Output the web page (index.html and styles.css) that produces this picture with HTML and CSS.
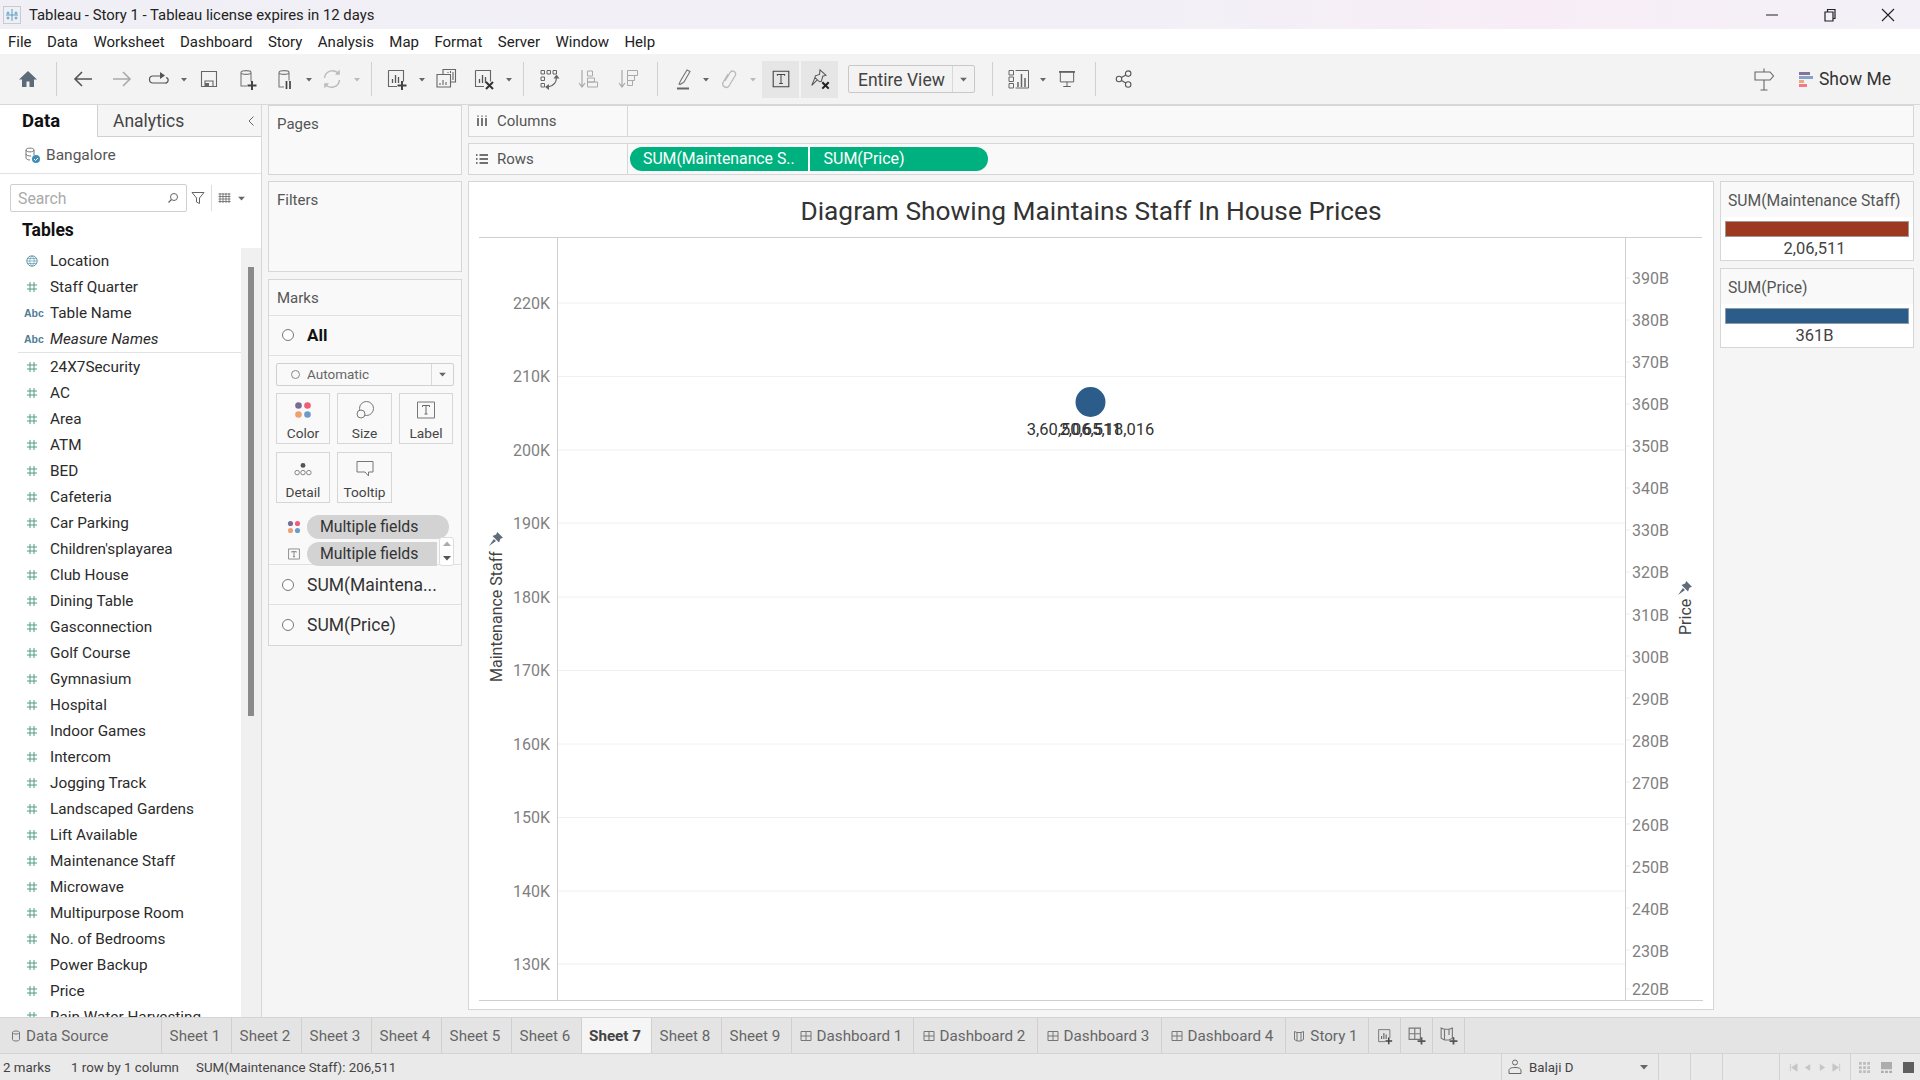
FILE: index.html
```html
<!DOCTYPE html>
<html lang="en">
<head>
<meta charset="utf-8">
<title>Tableau - Story 1</title>
<link rel="stylesheet" href="styles.css">
</head>
<body>
<svg class="sprite" aria-hidden="true">
  <defs>
    <symbol id="i-home" viewBox="0 0 24 24"><path fill="#5d6b78" d="M12 4 3 12.5h3V20h4.5v-5.5h3V20H18v-7.5h3z"/></symbol>
    <symbol id="i-back" viewBox="0 0 24 24"><path d="M22 12H5M12 5l-7 7 7 7" fill="none" stroke="#555" stroke-width="1.6"/></symbol>
    <symbol id="i-fwd" viewBox="0 0 24 24"><path d="M5 12h17M15 5l7 7-7 7" fill="none" stroke="#aaa" stroke-width="1.6"/></symbol>
    <symbol id="i-redo" viewBox="0 0 24 24"><path d="M15 9H7a3.5 3.5 0 0 0 0 7h12a2.800 2.800 0 0 0 1-5.500" fill="none" stroke="#555" stroke-width="1.200"/><path d="M14 5v7l5-3.500z" fill="#555"/></symbol>
    <symbol id="i-save" viewBox="0 0 24 24"><path d="M4.500 4.500h15v15h-15z" fill="none" stroke="#666" stroke-width="1.100"/><path d="M8 14h8v5.500H8z" fill="none" stroke="#666" stroke-width="1.100"/><path d="M8 16h4v3.500H8z" fill="#666"/></symbol>
    <symbol id="i-dsadd" viewBox="0 0 24 24"><path d="M6 5.500c0-2.500 10-2.500 10 0v9M6 5.500V19h6M6 5.500c0 2.500 10 2.500 10 0" fill="none" stroke="#777" stroke-width="1.100"/><path d="M17 14v9M12.500 18.500h9" stroke="#444" stroke-width="2"/></symbol>
    <symbol id="i-dspause" viewBox="0 0 24 24"><path d="M6 5.500c0-2.500 10-2.500 10 0v8M6 5.500V20h5M6 5.500c0 2.500 10 2.500 10 0" fill="none" stroke="#777" stroke-width="1.100"/><path d="M13.500 14v8M17 14v8" stroke="#444" stroke-width="1.700"/></symbol>
    <symbol id="i-refresh" viewBox="0 0 24 24"><path d="M4.500 11a8 8 0 0 1 14-4.500M19.500 13a8 8 0 0 1-14 4.500" fill="none" stroke="#bbb" stroke-width="1.500"/><path d="M15 8l5-.500-.500-5zM9 16l-5 .500.500 5z" fill="#bbb"/></symbol>
    <symbol id="i-sheetadd" viewBox="0 0 24 24"><path d="M3.500 3.500h15v11M3.500 3.500v16h8.500" fill="none" stroke="#666" stroke-width="1.100"/><path d="M7.500 16v-4M10.500 16V8M13.500 16v-6" stroke="#555" stroke-width="1.300"/><path d="M17 14v9M12.500 18.500h9" stroke="#444" stroke-width="2"/></symbol>
    <symbol id="i-dup" viewBox="0 0 24 24"><path d="M9 7V2.500h12.500V15H17" fill="none" stroke="#666" stroke-width="1.100"/><path d="M3 7.500h13.500V20H3z" fill="#f3f3f3" stroke="#666" stroke-width="1.100"/><path d="M6 18v-2M9 18v-5M12 18v-3M14 6v-1M16.500 6V4M19 13V5" stroke="#666" stroke-width="1.100"/></symbol>
    <symbol id="i-sheetx" viewBox="0 0 24 24"><path d="M3.500 3.500h15v11M3.500 3.500v16h8.500" fill="none" stroke="#666" stroke-width="1.100"/><path d="M7.500 16v-4M10.500 16V8M13.500 16v-6" stroke="#555" stroke-width="1.300"/><path d="M14 15l7 7M21 15l-7 7" stroke="#333" stroke-width="2"/></symbol>
    <symbol id="i-swap" viewBox="0 0 24 24"><path d="M4 3.500h3.500V7H4zM10 3.500h3.500V7H10zM16 3.500h3.500V7H16zM4 10h3.500v3.500H4zM4 16.500h3.500V20H4z" fill="none" stroke="#666"/><path d="M19.500 10c0 5-3 9-8.500 10" fill="none" stroke="#666" stroke-width="1.200"/><path d="M16.500 11.500h6l-3-4zM12 17v6l-4-3z" fill="#666"/></symbol>
    <symbol id="i-asc" viewBox="0 0 24 24"><path d="M6 3v17M3 16l3 4 3-4" fill="none" stroke="#aaa" stroke-width="1.200"/><path d="M11.500 4h5v5h-5zM11.500 11h7v4h-7zM11.500 15h10v5h-10z" fill="none" stroke="#aaa"/></symbol>
    <symbol id="i-desc" viewBox="0 0 24 24"><path d="M6 3v17M3 16l3 4 3-4" fill="none" stroke="#aaa" stroke-width="1.200"/><path d="M11.500 3.500h10v5h-10zM11.500 8.500h7v5h-7zM11.500 13.500h5v5h-5z" fill="none" stroke="#aaa"/></symbol>
    <symbol id="i-pen" viewBox="0 0 24 24"><path d="M8 17l2-4 6-10 3 1.500-6 10.500-4 2.500z" fill="none" stroke="#777" stroke-width="1.100"/><path d="M6 21.500h12" stroke="#666" stroke-width="2"/></symbol>
    <symbol id="i-clip" viewBox="0 0 24 24"><path d="M8 14l5.500-9a3 3 0 0 1 5 3L12 19a3.500 3.500 0 0 1-6-3.500L11 7" fill="none" stroke="#bbb" stroke-width="1.300"/></symbol>
    <symbol id="i-t" viewBox="0 0 24 24"><path d="M3.500 3.500h17v17h-17z" fill="none" stroke="#444" stroke-width="1.200"/><path d="M8 8.500V7h8v1.500M12 7v10M10 17h4" fill="none" stroke="#444" stroke-width="1.100"/></symbol>
    <symbol id="i-pinx" viewBox="0 0 24 24"><path d="M12 2l6.500 6-3.500 1-1.500 5.500-2 .500-5-4.500.500-2 4.500-1.500zM6.500 10.500 3 19l6-6" fill="none" stroke="#555" stroke-width="1.100"/><path d="M14.500 15.500l7 7M21.500 15.500l-7 7" stroke="#222" stroke-width="2.300"/></symbol>
    <symbol id="i-showme" viewBox="0 0 24 24"><path d="M3 3.500h4.500V8H3zM3 10h4.500v4.500H3zM3 16.500h4.500V21H3z" fill="none" stroke="#666"/><path d="M9.500 3.500h13V21h-13" fill="none" stroke="#666"/><path d="M12 20v-5M15.500 20V7M19 20v-9" stroke="#666" stroke-width="1.500"/></symbol>
    <symbol id="i-present" viewBox="0 0 24 24"><path d="M2.500 3.500h19" stroke="#555" stroke-width="2"/><path d="M4 4v11.500h16V4M12 15.500V21M7.500 21h9" fill="none" stroke="#555" stroke-width="1.100"/></symbol>
    <symbol id="i-share" viewBox="0 0 24 24"><circle cx="6" cy="12" r="3.300" fill="none" stroke="#555" stroke-width="1.300"/><circle cx="17" cy="5.500" r="3.300" fill="none" stroke="#555" stroke-width="1.300"/><circle cx="17" cy="18.500" r="3.300" fill="none" stroke="#555" stroke-width="1.300"/><path d="M9 10.300l5.200-3M9 13.700l5.200 3" stroke="#555" stroke-width="1.300"/></symbol>
    <symbol id="i-sign" viewBox="0 0 24 24"><path d="M3 5h15l3.500 4-3.500 4H3zM12 1.500V5M12 13v10M8.500 23h7" fill="none" stroke="#666" stroke-width="1.100"/></symbol>
    <symbol id="i-hash" viewBox="0 0 12 12"><path d="M4 1v10M8 1v10M1 4h10M1 8h10" fill="none" stroke="#4f9e80" stroke-width="1"/></symbol>
    <symbol id="i-globe" viewBox="0 0 12 12"><circle cx="6" cy="6" r="5.200" fill="none" stroke="#4e8ba0" stroke-width=".9"/><path d="M1 6h10M2 3.500h8M2 8.500h8M6 1c-3 3-3 7 0 10M6 1c3 3 3 7 0 10" fill="none" stroke="#4e8ba0" stroke-width=".6"/></symbol>
    <symbol id="i-dash" viewBox="0 0 12 12"><path d="M1 1.500h10v9H1zM6 1.500v9M1 6h10" fill="none" stroke="#777"/></symbol>
    <symbol id="i-book" viewBox="0 0 12 12"><path d="M1.500 1.500 4 2.500h4l2.500-1v8l-2.500 1.500H4L1.500 9.500zM4 2.500V11M8 2.500V11" fill="none" stroke="#777"/></symbol>
    <symbol id="i-cyl" viewBox="0 0 12 12"><path d="M2.500 2.500c0-2 7-2 7 0v7c0 2-7 2-7 0zM2.500 2.500c0 2 7 2 7 0" fill="none" stroke="#777"/></symbol>
    <symbol id="i-pin" viewBox="0 0 12 12"><path d="M7 0 12 5 9.800 5.800 8.600 9 3 3.400 6.200 2.200zM4.200 6 0 12 6 7.800z" fill="#5f6b7a"/></symbol>
    <symbol id="i-caret" viewBox="0 0 8 6"><path d="M0 1h8L4 5.500z" fill="#666"/></symbol>
    <symbol id="i-caret-soft" viewBox="0 0 8 6"><path d="M0 1h8L4 5.500z" fill="#bbb"/></symbol>
  </defs>
</svg>

<div class="app">
  <header class="titlebar">
    <svg class="logo" viewBox="0 0 18 18"><rect x=".5" y=".5" width="17" height="17" fill="#eef0f5" stroke="#c9c9d2"/><path d="M9 3v12M3 9h12M5 5.500v3M3.500 7h3M13 5.500v3M11.500 7h3M5 10.500v3M3.500 12h3M13 10.500v3M11.500 12h3" stroke="#5a9bc4" stroke-width="1"/></svg>
    <span class="titlebar-text">Tableau - Story 1 - Tableau license expires in 12 days</span>
    <div class="winctl">
      <svg viewBox="0 0 14 14"><path d="M1 7h12" stroke="#222" stroke-width="1"/></svg>
      <svg viewBox="0 0 14 14"><path d="M2 4h8v9H2zM4.500 4V1.500H12V10.500H10" fill="none" stroke="#222" stroke-width="1.200"/></svg>
      <svg viewBox="0 0 14 14"><path d="M1 1l12 12M13 1 1 13" stroke="#222" stroke-width="1.100"/></svg>
    </div>
  </header>

  <nav class="menubar">
    <span>File</span><span>Data</span><span>Worksheet</span><span>Dashboard</span><span>Story</span><span>Analysis</span><span>Map</span><span>Format</span><span>Server</span><span>Window</span><span>Help</span>
  </nav>

  <div class="toolbar">
    <div class="tb tb-first"><svg><use href="#i-home"/></svg></div>
    <div class="sep"></div>
    <div class="tb"><svg><use href="#i-back"/></svg></div>
    <div class="tb"><svg><use href="#i-fwd"/></svg></div>
    <div class="tb"><svg><use href="#i-redo"/></svg></div>
    <div class="car car-w"><svg><use href="#i-caret"/></svg></div>
    <div class="tb"><svg><use href="#i-save"/></svg></div>
    <div class="tb"><svg><use href="#i-dsadd"/></svg></div>
    <div class="tb"><svg><use href="#i-dspause"/></svg></div>
    <div class="car car-n"><svg><use href="#i-caret"/></svg></div>
    <div class="tb"><svg><use href="#i-refresh"/></svg></div>
    <div class="car"><svg><use href="#i-caret-soft"/></svg></div>
    <div class="sep"></div>
    <div class="tb"><svg><use href="#i-sheetadd"/></svg></div>
    <div class="car"><svg><use href="#i-caret"/></svg></div>
    <div class="tb"><svg><use href="#i-dup"/></svg></div>
    <div class="tb"><svg><use href="#i-sheetx"/></svg></div>
    <div class="car"><svg><use href="#i-caret"/></svg></div>
    <div class="sep"></div>
    <div class="tb"><svg><use href="#i-swap"/></svg></div>
    <div class="tb tb-sort"><svg><use href="#i-asc"/></svg></div>
    <div class="tb tb-sort"><svg><use href="#i-desc"/></svg></div>
    <div class="sep"></div>
    <div class="tb tb-pen"><svg><use href="#i-pen"/></svg></div>
    <div class="car car-n"><svg><use href="#i-caret"/></svg></div>
    <div class="tb tb-clip"><svg><use href="#i-clip"/></svg></div>
    <div class="car car-n"><svg><use href="#i-caret-soft"/></svg></div>
    <div class="tb-on tb-on-first"><svg><use href="#i-t"/></svg></div>
    <div class="tb-on"><svg><use href="#i-pinx"/></svg></div>
    <div class="fitbox"><span class="fitbox-text">Entire View</span><span class="fitbox-car"><svg><use href="#i-caret"/></svg></span></div>
    <div class="sep sep-fit"></div>
    <div class="tb"><svg><use href="#i-showme"/></svg></div>
    <div class="car"><svg><use href="#i-caret"/></svg></div>
    <div class="tb tb-sm"><svg><use href="#i-present"/></svg></div>
    <div class="sep"></div>
    <div class="tb tb-sm tb-share"><svg><use href="#i-share"/></svg></div>
    <div class="tb tb-sign"><svg><use href="#i-sign"/></svg></div>
    <div class="showme">
      <div class="showme-bars"><i class="b1"></i><i class="b2"></i><i class="b3"></i><i class="b4"></i></div>
      <span>Show Me</span>
    </div>
  </div>

  <main class="main">
    <aside class="datapane">
      <div class="tabs">
        <div class="tab-data">Data</div>
        <div class="tab-analytics"><span>Analytics</span><svg viewBox="0 0 8 12"><path d="M6.500 1.500 2 6l4.500 4.500" fill="none" stroke="#666" stroke-width="1"/></svg></div>
      </div>
      <div class="source">
        <svg class="source-ic" viewBox="0 0 18 18"><path d="M3 4c0-2.500 8-2.500 8 0v5M3 4v8c0 1 2 2 4 2M3 4c0 2.500 8 2.500 8 0M3 8c0 1.500 3 2 5 2" fill="none" stroke="#777"/><circle cx="13" cy="13" r="4" fill="#3d8fb8"/><path d="M11 13l1.500 1.500L15 12" fill="none" stroke="#fff"/></svg>
        <span>Bangalore</span>
      </div>
      <div class="searchrow">
        <div class="search"><span>Search</span><svg viewBox="0 0 12 12"><circle cx="7" cy="5" r="3.500" fill="none" stroke="#666"/><path d="M4.500 7.500 1.500 10.500" stroke="#666" stroke-width="1.200"/></svg></div>
        <svg class="filter-ic" viewBox="0 0 14 14"><path d="M1 1.500h12L8.500 7v5.500l-3-1.500V7z" fill="none" stroke="#666"/></svg>
        <div class="search-sep"></div>
        <svg class="list-ic" viewBox="0 0 12 10"><path d="M0 1h12M0 3.500h12M0 6h12M0 8.500h12M1.500 0v10M4.500 0v10M7.500 0v10M10.500 0v10" stroke="#666" stroke-width=".8" fill="none"/></svg>
        <svg class="list-car"><use href="#i-caret"/></svg>
      </div>
      <div class="tables">Tables</div>
      <div class="fieldwrap">
        <ul class="fields">
          <li><svg><use href="#i-globe"/></svg><span>Location</span></li>
          <li><svg><use href="#i-hash"/></svg><span>Staff Quarter</span></li>
          <li><b>Abc</b><span>Table Name</span></li>
          <li class="fields-last"><b>Abc</b><em>Measure Names</em></li>
          <li><svg><use href="#i-hash"/></svg><span>24X7Security</span></li>
          <li><svg><use href="#i-hash"/></svg><span>AC</span></li>
          <li><svg><use href="#i-hash"/></svg><span>Area</span></li>
          <li><svg><use href="#i-hash"/></svg><span>ATM</span></li>
          <li><svg><use href="#i-hash"/></svg><span>BED</span></li>
          <li><svg><use href="#i-hash"/></svg><span>Cafeteria</span></li>
          <li><svg><use href="#i-hash"/></svg><span>Car Parking</span></li>
          <li><svg><use href="#i-hash"/></svg><span>Children'splayarea</span></li>
          <li><svg><use href="#i-hash"/></svg><span>Club House</span></li>
          <li><svg><use href="#i-hash"/></svg><span>Dining Table</span></li>
          <li><svg><use href="#i-hash"/></svg><span>Gasconnection</span></li>
          <li><svg><use href="#i-hash"/></svg><span>Golf Course</span></li>
          <li><svg><use href="#i-hash"/></svg><span>Gymnasium</span></li>
          <li><svg><use href="#i-hash"/></svg><span>Hospital</span></li>
          <li><svg><use href="#i-hash"/></svg><span>Indoor Games</span></li>
          <li><svg><use href="#i-hash"/></svg><span>Intercom</span></li>
          <li><svg><use href="#i-hash"/></svg><span>Jogging Track</span></li>
          <li><svg><use href="#i-hash"/></svg><span>Landscaped Gardens</span></li>
          <li><svg><use href="#i-hash"/></svg><span>Lift Available</span></li>
          <li><svg><use href="#i-hash"/></svg><span>Maintenance Staff</span></li>
          <li><svg><use href="#i-hash"/></svg><span>Microwave</span></li>
          <li><svg><use href="#i-hash"/></svg><span>Multipurpose Room</span></li>
          <li><svg><use href="#i-hash"/></svg><span>No. of Bedrooms</span></li>
          <li><svg><use href="#i-hash"/></svg><span>Power Backup</span></li>
          <li><svg><use href="#i-hash"/></svg><span>Price</span></li>
          <li><svg><use href="#i-hash"/></svg><span>Rain Water Harvesting</span></li>
        </ul>
        <div class="scroll"><div class="scroll-thumb"></div></div>
      </div>
    </aside>

    <section class="cards">
      <div class="card card-pages"><div class="card-title">Pages</div></div>
      <div class="card card-filters"><div class="card-title">Filters</div></div>
      <div class="card card-marks">
        <div class="marks-title">Marks</div>
        <div class="marks-row marks-all"><i class="radio"></i><strong>All</strong></div>
        <div class="marks-body">
          <div class="marktype"><i class="radio-sm"></i><span>Automatic</span><span class="marktype-car"><svg><use href="#i-caret"/></svg></span></div>
          <div class="markbtns">
            <div class="markbtn">
              <svg viewBox="0 0 18 18"><circle cx="4.500" cy="4.500" r="3.300" fill="#7c6a96"/><circle cx="13.500" cy="4.500" r="3.300" fill="#ee5f75"/><circle cx="4.500" cy="13.500" r="3.300" fill="#f0a06e"/><circle cx="13.500" cy="13.500" r="3.300" fill="#6b9bc9"/></svg>
              <span>Color</span>
            </div>
            <div class="markbtn">
              <svg viewBox="0 0 18 18"><circle cx="10.500" cy="7.500" r="7" fill="none" stroke="#777"/><circle cx="5" cy="13" r="4" fill="#f9f9f9" stroke="#777"/></svg>
              <span>Size</span>
            </div>
            <div class="markbtn">
              <svg viewBox="0 0 18 18"><path d="M.500 1h17v16H.500z" fill="none" stroke="#777"/><path d="M5.500 6V4.500h7V6M9 4.500V13M7.500 13h3" fill="none" stroke="#666"/></svg>
              <span>Label</span>
            </div>
            <div class="markbtn">
              <svg viewBox="0 0 20 18"><circle cx="10" cy="5" r="2.700" fill="#555"/><circle cx="3.500" cy="13" r="2.500" fill="none" stroke="#777"/><circle cx="10" cy="13" r="2.500" fill="none" stroke="#777"/><circle cx="16.500" cy="13" r="2.500" fill="none" stroke="#777"/></svg>
              <span>Detail</span>
            </div>
            <div class="markbtn">
              <svg viewBox="0 0 18 18"><path d="M1 1.500h16V12h-4.500v4L9 12H1z" fill="none" stroke="#777" stroke-linejoin="round"/></svg>
              <span>Tooltip</span>
            </div>
          </div>
          <div class="markpills">
            <div class="markpill-row">
              <svg class="markpill-ic" viewBox="0 0 18 18"><circle cx="4.500" cy="4.500" r="3.300" fill="#7c6a96"/><circle cx="13.500" cy="4.500" r="3.300" fill="#ee5f75"/><circle cx="4.500" cy="13.500" r="3.300" fill="#f0a06e"/><circle cx="13.500" cy="13.500" r="3.300" fill="#6b9bc9"/></svg>
              <span class="markpill">Multiple fields</span>
            </div>
            <div class="markpill-row">
              <svg class="markpill-ic" viewBox="0 0 18 18"><path d="M2 2.500h14v13H2z" fill="none" stroke="#777"/><path d="M6 7V6h6v1M9 6v6.500M7.800 12.500h2.400" fill="none" stroke="#666"/></svg>
              <span class="markpill markpill-cut">Multiple fields</span>
            </div>
            <div class="pillscroll">
              <svg viewBox="0 0 8 6"><path d="M0 5h8L4 .5z" fill="#aaa"/></svg>
              <svg class="pillscroll-dn" viewBox="0 0 8 6"><path d="M0 1h8L4 5.500z" fill="#555"/></svg>
            </div>
          </div>
        </div>
        <div class="marks-row"><i class="radio"></i><span>SUM(Maintena...</span></div>
        <div class="marks-row"><i class="radio"></i><span>SUM(Price)</span></div>
      </div>
    </section>

    <section class="viz">
      <div class="shelf">
        <div class="shelf-label"><svg viewBox="0 0 12 12"><path d="M2 3v8M6 3v8M10 3v8" stroke="#555" stroke-width="1.600"/><path d="M2 .5v1.200M6 .5v1.200M10 .5v1.200" stroke="#555" stroke-width="1.300"/></svg><span>Columns</span></div>
      </div>
      <div class="shelf">
        <div class="shelf-label"><svg viewBox="0 0 12 12"><path d="M3.500 2h8.500M3.500 6h8.500M3.500 10h8.500M0 2h1.500M0 6h1.500M0 10h1.500" stroke="#444" stroke-width="1.400"/></svg><span>Rows</span></div>
        <div class="pills">
          <span class="pill pill-l">SUM(Maintenance S..</span>
          <span class="pill pill-r">SUM(Price)</span>
        </div>
      </div>
      <div class="vizrow">
        <div class="chartcard">
          <h1 class="charttitle">Diagram Showing Maintains Staff In House Prices</h1>
          <svg class="plot" viewBox="469 237 1244 773">
            <g class="grid">
              <path d="M557 303H1625M557 376.500H1625M557 450H1625M557 523H1625M557 597H1625M557 670.500H1625M557 744H1625M557 817.500H1625M557 891H1625M557 964H1625"/>
            </g>
            <g class="ticks">
              <path d="M1625 278h5M1625 320h5M1625 362h5M1625 404h5M1625 446h5M1625 488h5M1625 530h5M1625 572h5M1625 614h5M1625 656h5M1625 698h5M1625 740h5M1625 782h5M1625 824h5M1625 866h5M1625 908h5M1625 950h5M1625 989h5"/>
            </g>
            <path class="axis" d="M479 237.500H1702M557.500 237V1000M1625.500 237V1000M479 1000.500H1703"/>
            <g class="ax ax-l">
              <text x="550" y="309">220K</text><text x="550" y="382">210K</text><text x="550" y="456">200K</text><text x="550" y="529">190K</text><text x="550" y="603">180K</text><text x="550" y="676">170K</text><text x="550" y="750">160K</text><text x="550" y="823">150K</text><text x="550" y="897">140K</text><text x="550" y="970">130K</text>
            </g>
            <g class="ax">
              <text x="1632" y="284">390B</text><text x="1632" y="326">380B</text><text x="1632" y="368">370B</text><text x="1632" y="410">360B</text><text x="1632" y="452">350B</text><text x="1632" y="494">340B</text><text x="1632" y="536">330B</text><text x="1632" y="578">320B</text><text x="1632" y="621">310B</text><text x="1632" y="663">300B</text><text x="1632" y="705">290B</text><text x="1632" y="747">280B</text><text x="1632" y="789">270B</text><text x="1632" y="831">260B</text><text x="1632" y="873">250B</text><text x="1632" y="915">240B</text><text x="1632" y="957">230B</text><text x="1632" y="995">220B</text>
            </g>
            <text class="axtitle" transform="translate(502 682) rotate(-90)">Maintenance Staff</text>
            <use href="#i-pin" x="489" y="532" width="14" height="14"/>
            <text class="axtitle" transform="translate(1691 635) rotate(-90)">Price</text>
            <use href="#i-pin" x="1678" y="581" width="14" height="14"/>
            <circle class="dot" cx="1090.500" cy="402" r="15"/>
            <text class="marklabel" x="1090.500" y="435">3,60,50,65,18,016</text>
            <text class="marklabel" x="1090.500" y="435">2,06,511</text>
          </svg>
        </div>
        <div class="legends">
          <div class="legend">
            <div class="legend-title">SUM(Maintenance Staff)</div>
            <div class="legend-bar legend-bar-red"></div>
            <div class="legend-val">2,06,511</div>
          </div>
          <div class="legend">
            <div class="legend-title">SUM(Price)</div>
            <div class="legend-bar legend-bar-blue"></div>
            <div class="legend-val">361B</div>
          </div>
        </div>
      </div>
    </section>
  </main>

  <div class="sheettabs">
    <div class="st st-ds"><svg><use href="#i-cyl"/></svg><span>Data Source</span></div>
    <div class="st">Sheet 1</div><div class="st">Sheet 2</div><div class="st">Sheet 3</div><div class="st">Sheet 4</div><div class="st">Sheet 5</div><div class="st">Sheet 6</div>
    <div class="st st-on">Sheet 7</div>
    <div class="st">Sheet 8</div><div class="st">Sheet 9</div>
    <div class="st st-db st-db1"><svg><use href="#i-dash"/></svg><span>Dashboard 1</span></div>
    <div class="st st-db"><svg><use href="#i-dash"/></svg><span>Dashboard 2</span></div>
    <div class="st st-db"><svg><use href="#i-dash"/></svg><span>Dashboard 3</span></div>
    <div class="st st-db"><svg><use href="#i-dash"/></svg><span>Dashboard 4</span></div>
    <div class="st st-story"><svg><use href="#i-book"/></svg><span>Story 1</span></div>
    <div class="st st-add"><svg class="st-addic"><use href="#i-sheetadd"/></svg></div>
    <div class="st st-add"><svg class="st-addic" viewBox="0 0 16 16"><path d="M1 1h10v10H1zM6 1v10M1 6h10" fill="none" stroke="#777"/><path d="M12 9v6.500M8.500 12.500h7" stroke="#555" stroke-width="1.600"/></svg></div>
    <div class="st st-add"><svg class="st-addic" viewBox="0 0 16 16"><path d="M1 1l3 1h4l3-1v9l-3 1.500H4L1 10zM4 2v9M8 2v5" fill="none" stroke="#777"/><path d="M12 9v6.500M8.500 12.500h7" stroke="#555" stroke-width="1.600"/></svg></div>
  </div>

  <footer class="status">
    <span class="status-a">2 marks</span>
    <span class="status-b">1 row by 1 column</span>
    <span class="status-c">SUM(Maintenance Staff): 206,511</span>
    <div class="status-user">
      <svg viewBox="0 0 14 16"><circle cx="7" cy="3.500" r="2.500" fill="none" stroke="#666"/><path d="M1 14.500v-3c0-2 2-3 6-3s6 1 6 3v3z" fill="none" stroke="#666"/></svg>
      <span>Balaji D</span>
      <svg class="status-car"><use href="#i-caret"/></svg>
    </div>
    <div class="status-cell"></div>
    <div class="status-cell"></div>
    <div class="status-cell status-cell-w"></div>
    <div class="status-nav">
      <svg viewBox="0 0 10 10"><path d="M1.500 1v8M9 1v8L3 5z" stroke="#c6c6c6" fill="#c6c6c6"/></svg>
      <svg viewBox="0 0 10 10"><path d="M8 1v8L2 5z" fill="#c6c6c6"/></svg>
      <svg viewBox="0 0 10 10"><path d="M2 1v8l6-4z" fill="#c6c6c6"/></svg>
      <svg viewBox="0 0 10 10"><path d="M8.500 1v8M1 1v8l6-4z" stroke="#c6c6c6" fill="#c6c6c6"/></svg>
    </div>
    <div class="status-views">
      <svg viewBox="0 0 12 12"><path d="M0 0h3v3H0zM4.500 0h3v3h-3zM9 0h3v3H9zM0 4.500h3v3H0zM4.500 4.500h3v3h-3zM9 4.500h3v3H9zM0 9h3v3H0zM4.500 9h3v3h-3zM9 9h3v3H9z" fill="#bdbdbd"/></svg>
      <svg viewBox="0 0 12 12"><path d="M0 0h12v8H0zM0 9.500h3V12H0zM4.500 9.500h3V12h-3zM9 9.500h3V12H9z" fill="#adadad"/></svg>
      <svg viewBox="0 0 12 12"><path d="M0 0h12v12H0z" fill="#5f5f5f"/></svg>
    </div>
  </footer>
</div>
</body>
</html>
```

FILE: styles.css
```css
* { box-sizing: border-box; }
html, body { margin: 0; padding: 0; height: 100%; overflow: hidden; }
body { font-family: Roboto, "Liberation Sans", sans-serif; font-size: 15px; color: #333; background: #f5f5f5; }
.sprite { position: absolute; width: 0; height: 0; }
.app { display: flex; flex-direction: column; height: 1080px; width: 1920px; }

/* title + menu */
.titlebar { height: 29px; flex: none; display: flex; align-items: center; background: linear-gradient(90deg, #f0eff5 0%, #f2f0f6 60%, #f8edf6 80%, #f3f1f7 100%); color: #222; }
.logo { width: 18px; height: 18px; margin: 0 8px 0 3px; }
.titlebar-text { font-size: 14.850px; }
.winctl { margin-left: auto; display: flex; gap: 44px; padding-right: 25px; }
.winctl svg { width: 14px; height: 14px; }
.menubar { height: 25px; flex: none; display: flex; align-items: center; gap: 15.400px; padding-left: 8px; background: #fff; color: #222; font-size: 15px; }

/* toolbar */
.toolbar { height: 51px; flex: none; display: flex; align-items: center; background: #f3f3f3; padding-left: 9px; border-bottom: 1px solid #d8d8d8; }
.tb { width: 38px; height: 38px; flex: none; display: flex; align-items: center; justify-content: center; }
.tb svg { width: 24px; height: 24px; }
.tb-sort { width: 40px; }
.tb-sm svg { width: 20px; height: 20px; }
.tb-share { margin-left: 3px; }
.tb-pen { width: 36px; margin-left: 1px; }
.tb-clip { width: 36px; margin-left: 1px; margin-right: 1px; }
.tb-sign { margin-left: auto; }
.car { width: 11px; flex: none; display: flex; justify-content: center; }
.car svg { width: 6px; height: 5px; }
.car-w { width: 13px; }
.car-n { width: 9px; }
.sep { width: 1px; height: 34px; background: #d0d0d0; margin: 0 6px 0 9px; flex: none; }
.sep-fit { margin-left: 17px; }
.tb-on { width: 37px; height: 37px; margin-left: 1px; margin-right: 1px; flex: none; display: flex; align-items: center; justify-content: center; background: #e6e6e6; }
.tb-on-first { margin-left: 5px; }
.tb-on svg { width: 22px; height: 22px; }
.fitbox { width: 127px; height: 28px; margin-left: 9px; flex: none; display: flex; align-items: center; border: 1px solid #c8c8c8; border-radius: 2px; font-size: 17.500px; color: #444; }
.fitbox-text { flex: 1; padding: 1px 0 0 9px; }
.fitbox-car { width: 22px; height: 100%; border-left: 1px solid #d8d8d8; display: flex; align-items: center; justify-content: center; }
.fitbox-car svg { width: 7px; height: 5px; }
.showme { display: flex; align-items: center; gap: 6px; font-size: 17.500px; color: #333; padding: 0 29px 0 16px; }
.showme-bars { display: flex; flex-direction: column; gap: 1px; width: 14px; }
.showme-bars i { display: block; height: 3px; }
.b1 { width: 11px; background: #85739a; }
.b2 { width: 14px; background: #84a5cb; }
.b3 { width: 5px; background: #f0a77e; }
.b4 { width: 8px; background: #f27a85; }

/* main layout */
.main { flex: 1; min-height: 0; display: flex; }
.datapane { width: 262px; flex: none; display: flex; flex-direction: column; background: #fff; border-right: 1px solid #d8d8d8; }
.tabs { height: 32px; flex: none; display: flex; }
.tab-data { width: 98px; display: flex; align-items: center; padding-left: 22px; font-size: 18.500px; font-weight: 700; color: #111; border-right: 1px solid #d0d0d0; }
.tab-analytics { flex: 1; display: flex; align-items: center; justify-content: space-between; padding: 0 6px 0 15px; font-size: 17.500px; color: #444; background: #f5f5f5; border-bottom: 1px solid #d0d0d0; }
.tab-analytics svg { width: 8px; height: 12px; }
.source { height: 37px; flex: none; display: flex; align-items: center; gap: 5px; padding-left: 23px; border-bottom: 1px solid #e2e2e2; color: #555; font-size: 15.500px; }
.source-ic { width: 18px; height: 18px; }
.searchrow { height: 28px; margin-top: 10px; flex: none; display: flex; align-items: center; padding-left: 10px; font-size: 15.800px; }
.search { width: 177px; height: 28px; display: flex; align-items: center; justify-content: space-between; border: 1px solid #cfcfcf; border-radius: 2px; padding: 0 7px; color: #aaa; }
.search svg { width: 12px; height: 12px; }
.filter-ic { width: 14px; height: 14px; margin-left: 4px; }
.search-sep { width: 1px; height: 26px; background: #ddd; margin: 0 6px; }
.list-ic { width: 13px; height: 10px; }
.list-car { width: 7px; height: 5px; margin-left: 7px; }
.tables { flex: none; height: 36px; display: flex; align-items: center; padding-left: 22px; font-size: 17.500px; font-weight: 700; color: #111; }
.fieldwrap { flex: 1; min-height: 0; display: flex; overflow: hidden; }
.fields { list-style: none; margin: 0; padding: 0 0 0 18px; flex: 1; min-width: 0; font-size: 15.300px; }
.fields li { height: 26px; display: flex; align-items: center; color: #2b2b2b; }
.fields li svg { width: 12px; height: 12px; margin: 0 12px 0 8px; flex: none; }
.fields li b { width: 32px; flex: none; font-size: 10.500px; font-weight: 700; padding-left: 6px; color: #4e7d96; font-family: "Liberation Sans", sans-serif; }
.fields li em { font-style: italic; }
.fields-last { height: 27px !important; border-bottom: 1px solid #e2e2e2; margin-bottom: 1px; }
.scroll { width: 20px; flex: none; background: #f0f0f0; padding: 21px 7px 0; margin-top: -2px; }
.scroll-thumb { height: 449px; background: #8a8a8a; }

.cards { width: 206px; flex: none; display: flex; flex-direction: column; gap: 6.500px; padding-left: 6px; padding-right: 6px; }
.card { background: #f9f9f9; border: 1px solid #d6d6d6; }
.card-pages { height: 69.500px; }
.card-filters { height: 91px; }
.card-marks { height: 367px; display: flex; flex-direction: column; }
.card-title { padding: 9px 0 0 8px; color: #555; }
.marks-title { height: 36px; flex: none; display: flex; align-items: center; padding: 2px 0 0 8px; color: #555; border-bottom: 1px solid #e0e0e0; }
.marks-row { height: 40px; flex: none; display: flex; align-items: center; gap: 13px; padding: 1px 0 0 13px; border-bottom: 1px solid #e0e0e0; font-size: 17.500px; color: #333; }
.marks-row:last-child { border-bottom: 0; }
.marks-all { font-size: 17px; padding-top: 0; }
.marks-all strong { color: #111; }
.radio { width: 12px; height: 12px; border: 1.500px solid #777; border-radius: 50%; flex: none; background: #fff; }
.radio-sm { width: 9px; height: 9px; border: 1px solid #888; border-radius: 50%; flex: none; }
.marks-body { flex: 1; min-height: 0; padding: 7px 7px 0 7px; border-bottom: 1px solid #e0e0e0; position: relative; }
.marktype { height: 23px; display: flex; align-items: center; border: 1px solid #d0d0d0; border-radius: 2px; padding-left: 14px; font-size: 13.500px; color: #666; gap: 7px; }
.marktype-car { margin-left: auto; width: 22px; height: 100%; display: flex; align-items: center; justify-content: center; border-left: 1px solid #d8d8d8; }
.marktype-car svg { width: 7px; height: 5px; }
.markbtns { display: grid; grid-template-columns: 54px 55px 54px; column-gap: 7px; row-gap: 7.500px; margin-top: 7.500px; }
.markbtn { height: 51px; display: flex; flex-direction: column; align-items: center; justify-content: flex-end; border: 1px solid #d6d6d6; font-size: 13.700px; color: #444; padding-bottom: 2px; gap: 6px; }
.markbtn svg { width: 18px; height: 18px; }
.markpills { position: relative; margin-top: 12px; display: flex; flex-direction: column; gap: 3px; }
.markpill-row { display: flex; align-items: center; gap: 6px; padding-left: 11px; }
.markpill-ic { width: 14px; height: 14px; flex: none; }
.markpill { width: 142px; height: 24px; display: flex; align-items: center; padding-left: 13px; background: #d3d3d3; border-radius: 12px; font-size: 15.800px; color: #333; }
.markpill-cut { border-radius: 12px 0 0 12px; width: 130px; }
.pillscroll { position: absolute; right: 0; top: 22px; width: 15px; height: 29px; display: flex; flex-direction: column; align-items: center; justify-content: space-around; background: #fff; border: 1px solid #ddd; border-radius: 3px; }
.pillscroll svg { width: 8px; height: 6px; }

/* viz */
.viz { flex: 1; min-width: 0; display: flex; flex-direction: column; gap: 6.500px; padding-right: 6px; }
.shelf { height: 31.500px; flex: none; display: flex; align-items: center; background: #f9f9f9; border: 1px solid #d6d6d6; }
.shelf-label { width: 159px; height: 100%; flex: none; display: flex; align-items: center; gap: 9px; padding: 1px 0 0 7px; color: #555; border-right: 1px solid #d6d6d6; }
.shelf-label svg { width: 12px; height: 12px; }
.pills { display: flex; gap: 1.500px; padding-left: 2px; }
.pill { height: 24px; width: 178px; display: flex; align-items: center; color: #fff; background: #00b180; font-size: 15.800px; }
.pill-l { border-radius: 12px 0 0 12px; padding-left: 13px; }
.pill-r { border-radius: 0 12px 12px 0; padding-left: 14px; font-size: 16px; }
.vizrow { flex: 1; min-height: 0; display: flex; gap: 6px; padding-bottom: 7px; }
.chartcard { width: 1246px; flex: none; background: #fff; border: 1px solid #d6d6d6; display: flex; flex-direction: column; }
.charttitle { height: 55px; flex: none; margin: 0; display: flex; align-items: center; justify-content: center; font-size: 26.300px; font-weight: 400; color: #333; padding-top: 3px; }
.plot { width: 1244px; height: 773px; display: block; flex: none; }
.grid path { stroke: #f0f0f0; stroke-width: 1; fill: none; }
.ticks path { stroke: #eeeeee; stroke-width: 1; fill: none; }
.axis { stroke: #cfcfcf; stroke-width: 1; fill: none; }
.ax text { font-size: 16px; fill: #7f7f7f; }
.ax-l text { text-anchor: end; }
.axtitle { font-size: 16px; fill: #444; }
.dot { fill: #2c5c8a; }
.marklabel { font-size: 16.500px; fill: #333; text-anchor: middle; }

.legends { flex: 1; min-width: 0; display: flex; flex-direction: column; gap: 7px; }
.legend { height: 80px; flex: none; background: #fff; border: 1px solid #d6d6d6; display: flex; flex-direction: column; }
.legend-title { height: 35px; flex: none; padding: 9px 0 0 7px; background: #f9f9f9; color: #555; font-size: 15.700px; white-space: nowrap; }
.legend-bar { height: 16px; margin: 4px 4px 0; flex: none; border: 1px solid #a09a94; }
.legend-bar-red { background: #9c3a20; }
.legend-bar-blue { background: #2c5c8a; border-color: #8e9aa6; }
.legend-val { flex: 1; display: flex; align-items: center; justify-content: center; padding-right: 5px; color: #444; font-size: 16.500px; }

/* bottom */
.sheettabs { height: 37px; flex: none; display: flex; background: #e4e4e4; border-top: 1px solid #d4d4d4; border-bottom: 1px solid #d4d4d4; }
.st { width: 70px; flex: none; display: flex; align-items: center; justify-content: center; gap: 5px; padding-right: 3px; color: #666; border-right: 1px solid #d0d0d0; font-size: 15.200px; }
.st svg { width: 12px; height: 12px; flex: none; }
.st-ds { width: 162px; justify-content: flex-start; padding-left: 10px; gap: 4px; }
.st-on { background: #f5f5f5; font-weight: 700; color: #444; }
.st-db { width: 124px; }
.st-db1 { width: 122px; }
.st-story { width: 83px; }
.st-add { width: 32px; padding-right: 0; }
.st svg.st-addic { width: 18px; height: 18px; }
.status { height: 26px; flex: none; display: flex; align-items: center; background: #eaeaea; color: #444; font-size: 13.300px; }
.status-a { width: 71px; padding-left: 3px; flex: none; }
.status-b { width: 125px; flex: none; }
.status-c { width: 1305px; flex: none; }
.status-user { width: 157px; height: 100%; flex: none; display: flex; align-items: center; padding-left: 6px; border-left: 1px solid #d2d2d2; }
.status-user svg { width: 14px; height: 16px; margin-right: 7px; margin-left: 0; }
.status-user span { flex: 1; padding-left: 0; }
.status-user .status-car { width: 8px; height: 6px; margin-right: 10px; }
.status-cell { width: 32px; height: 100%; flex: none; border-left: 1px solid #d2d2d2; }
.status-cell-w { width: 57px; }
.status-nav { width: 71px; height: 100%; flex: none; display: flex; align-items: center; justify-content: space-around; padding: 0 6px; border-left: 1px solid #d2d2d2; }
.status-nav svg { width: 9px; height: 9px; }
.status-views { flex: 1; height: 100%; display: flex; align-items: center; gap: 11px; padding-left: 8px; border-left: 1px solid #d2d2d2; }
.status-views svg { width: 11px; height: 11px; }
```
